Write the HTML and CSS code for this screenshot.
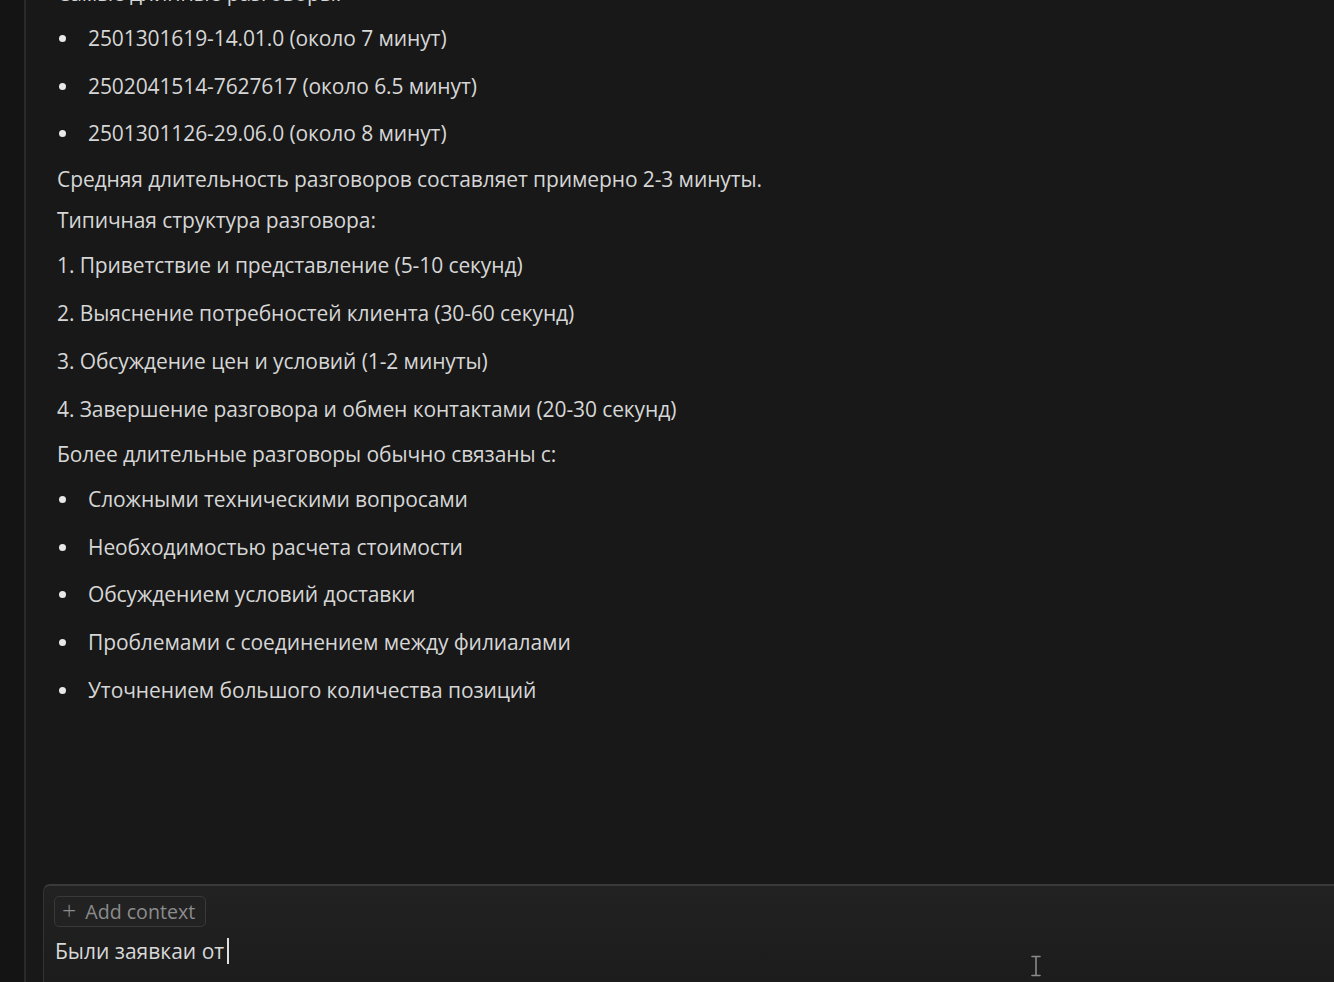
FILE: index.html
```html
<!DOCTYPE html>
<html lang="ru">
<head>
<meta charset="utf-8">
<title>Chat</title>
<link rel="stylesheet" href="styles.css">
</head>
<body>
<div class="app">
  <aside class="rail"></aside>
  <main class="pane">
    <section class="messages">
      <div class="msg">
        <p class="para first">Самые длинные разговоры:</p>
        <ul class="bullets">
          <li>2501301619-14.01.0 (около 7 минут)</li>
          <li>2502041514-7627617 (около 6.5 минут)</li>
          <li>2501301126-29.06.0 (около 8 минут)</li>
        </ul>
        <p class="para">Средняя длительность разговоров составляет примерно 2-3 минуты.</p>
        <p class="para">Типичная структура разговора:</p>
        <div class="numbered">
          <p class="num">1. Приветствие и представление (5-10 секунд)</p>
          <p class="num">2. Выяснение потребностей клиента (30-60 секунд)</p>
          <p class="num">3. Обсуждение цен и условий (1-2 минуты)</p>
          <p class="num">4. Завершение разговора и обмен контактами (20-30 секунд)</p>
        </div>
        <p class="para">Более длительные разговоры обычно связаны с:</p>
        <ul class="bullets">
          <li>Сложными техническими вопросами</li>
          <li>Необходимостью расчета стоимости</li>
          <li>Обсуждением условий доставки</li>
          <li>Проблемами с соединением между филиалами</li>
          <li>Уточнением большого количества позиций</li>
        </ul>
      </div>
    </section>
    <section class="composer">
      <button class="chip"><span class="plus">+</span>Add context</button>
      <div class="input"><span class="typed">Были заявкаи от</span><span class="caret"></span></div>
      <svg class="ibeam" width="12" height="22" viewBox="0 0 12 22" aria-hidden="true">
        <path d="M2 1.5h8M6 1.5v19M2 20.5h8" stroke="#8a8a8a" stroke-width="1.6" fill="none" stroke-linecap="round"/>
      </svg>
    </section>
  </main>
</div>
</body>
</html>
```
FILE: styles.css
```css
* { box-sizing: border-box; }
html, body { margin: 0; padding: 0; height: 100%; }
body {
  background: #181818;
  font-family: "Open Sans", "Noto Sans", sans-serif;
  color: #d6d6d6;
  overflow: hidden;
}
.app {
  display: flex;
  height: 982px;
  width: 1334px;
}
.rail {
  width: 26px;
  flex: none;
  background: #141414;
  border-right: 2px solid #2a2a2a;
}
.pane {
  flex: 1;
  display: flex;
  flex-direction: column;
  background: #181818;
  position: relative;
}
.messages {
  flex: 1;
  overflow: hidden;
  padding: 0 0 0 31px;
}
.msg {
  font-size: 21px;
  font-weight: 500;
  line-height: 28px;
  letter-spacing: -0.1px;
}
.para { margin: 0 0 13px; }
.para.first { margin-top: -21px; }
.bullets {
  margin: 17px 0 18px;
  padding-left: 31px;
  list-style: none;
}
.bullets li {
  position: relative;
}
.bullets li + li { margin-top: 19.6px; }
.bullets li::before {
  content: "";
  position: absolute;
  left: -29px;
  top: 11px;
  width: 7px;
  height: 7px;
  border-radius: 50%;
  background: #e8e8e8;
}
.numbered { margin: 17px 0 17px; }
.num { margin: 0; }
.num + .num { margin-top: 20px; }

.composer {
  flex: none;
  height: 98px;
  margin-left: 17px;
  border-top: 2px solid #3a3a3a;
  border-left: 1px solid #333;
  border-top-left-radius: 7px;
  background: linear-gradient(#222222, #1c1c1c);
  padding: 10px 0 0 10px;
  position: relative;
}
.chip {
  display: inline-flex;
  align-items: center;
  gap: 9px;
  height: 31px;
  width: 152px;
  padding: 0 0 0 7px;
  background: #222;
  border: 1px solid #393939;
  border-radius: 5px;
  color: #8c8c8c;
  font-family: "Open Sans", "Noto Sans", sans-serif;
  font-size: 19.6px;
}
.plus { font-size: 25px; line-height: 1; margin-top: -3px; color: #8a8a8a; font-weight: 300; }
.input {
  display: flex;
  align-items: center;
  margin-top: 10px;
  font-size: 21px;
  font-weight: 500;
  line-height: 28px;
  color: #d8d8d8;
  padding-left: 1px;
}
.caret {
  display: inline-block;
  width: 2px;
  height: 26px;
  margin-left: 3px;
  background: #e0e0e0;
}
.ibeam {
  position: absolute;
  left: 986px;
  top: 69px;
}
```
